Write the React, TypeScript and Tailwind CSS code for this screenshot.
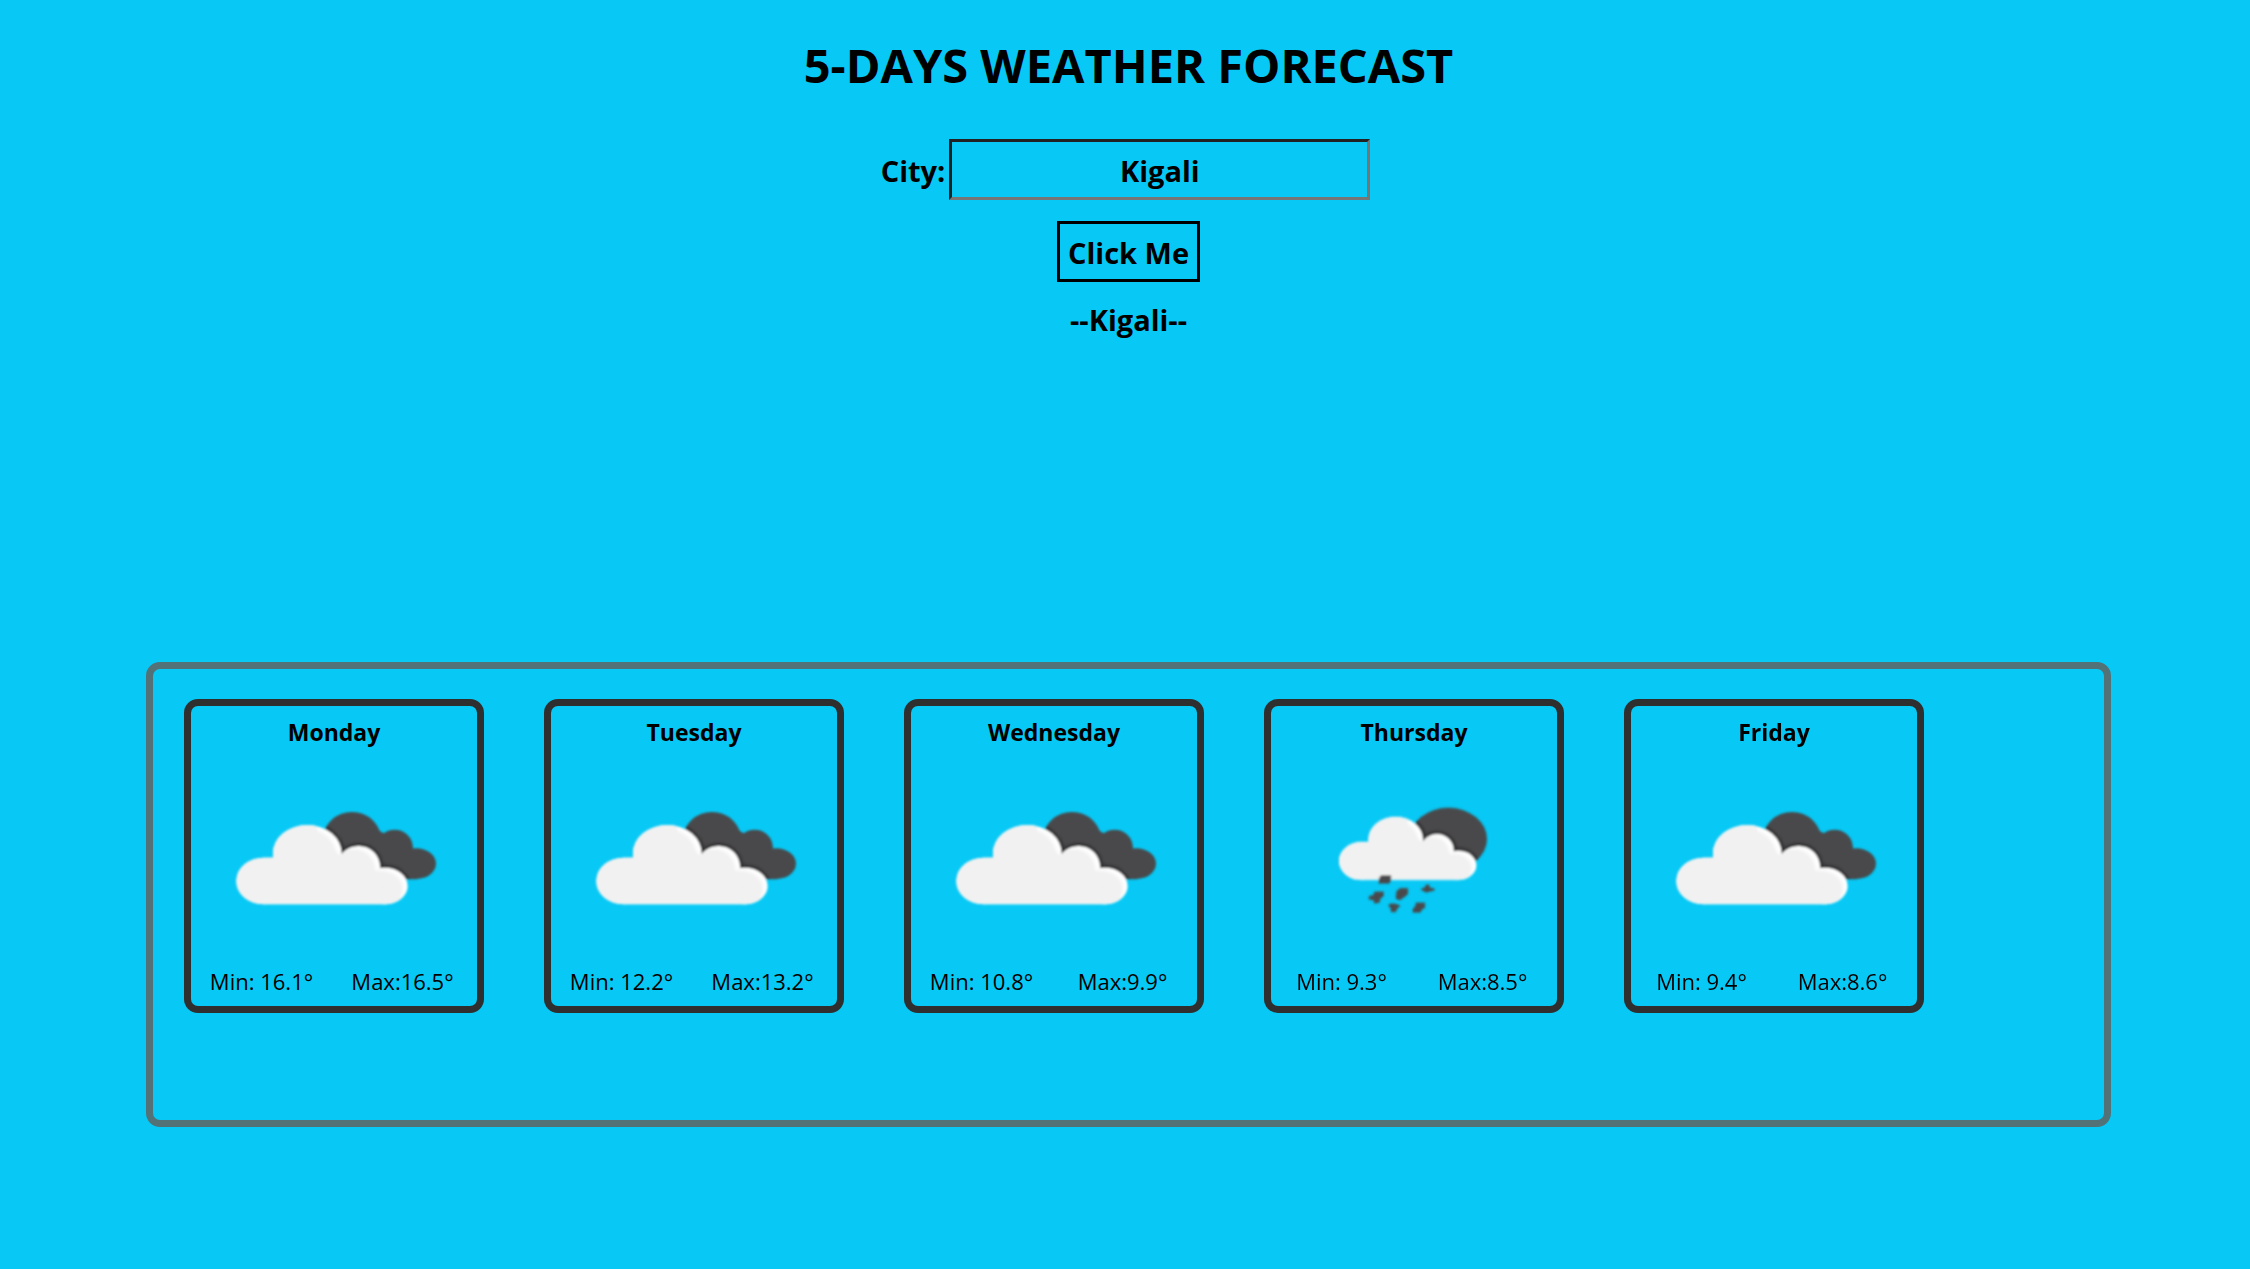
import { useId, useState } from "react";

type Sky = "clouds" | "rain";

interface Day {
  name: string;
  sky: Sky;
  min: string;
  max: string;
}

const DAYS: Day[] = [
  { name: "Monday", sky: "clouds", min: "16.1", max: "16.5" },
  { name: "Tuesday", sky: "clouds", min: "12.2", max: "13.2" },
  { name: "Wednesday", sky: "clouds", min: "10.8", max: "9.9" },
  { name: "Thursday", sky: "rain", min: "9.3", max: "8.5" },
  { name: "Friday", sky: "clouds", min: "9.4", max: "8.6" },
];

// Shape lists are plain fragments so that they can fill a <g> or a <clipPath>.
const bigCloud = (
  <>
    <path d="M130 203 H300 L400 230 L500 240 V343 H130 Z" />
    <ellipse cx="130" cy="273" rx="82" ry="70" />
    <ellipse cx="261" cy="190" rx="103" ry="85" />
    <ellipse cx="415" cy="230" rx="64" ry="62" />
    <ellipse cx="493" cy="288" rx="69" ry="55" />
  </>
);

const backCloud = (
  <>
    <path d="M330 120 L440 100 L540 160 L600 200 L590 268 H520 L340 180 Z" />
    <ellipse cx="395" cy="148" rx="87" ry="82" />
    <ellipse cx="523" cy="174" rx="55" ry="55" />
    <ellipse cx="588" cy="221" rx="59" ry="46" />
  </>
);

const smallCloud = (
  <>
    <path d="M122 156 H260 L350 180 L415 190 V270 H122 Z" />
    <ellipse cx="122" cy="213" rx="66" ry="57" />
    <ellipse cx="226" cy="148" rx="82" ry="68" />
    <ellipse cx="350" cy="180" rx="50" ry="48" />
    <ellipse cx="413" cy="226" rx="55" ry="44" />
  </>
);

const darkDisc = <ellipse cx="384" cy="147" rx="116" ry="94" />;

function CloudsIcon() {
  const id = useId();
  return (
    <svg viewBox="-4 0 690 420" className="h-[140px] w-[230px]" aria-hidden="true">
      <defs>
        <filter id={id + "soft"}>
          <feGaussianBlur stdDeviation="3" />
        </filter>
        <filter id={id + "shade"}>
          <feGaussianBlur stdDeviation="5" />
        </filter>
        <clipPath id={id + "back"}>{backCloud}</clipPath>
        <clipPath id={id + "front"}>{bigCloud}</clipPath>
      </defs>
      <g filter={`url(#${id}soft)`}>
        <g fill="#4a494b">{backCloud}</g>
        <g clipPath={`url(#${id}back)`}>
          <g fill="#2b2c2e" stroke="#2b2c2e" strokeWidth="16" filter={`url(#${id}shade)`}>
            {bigCloud}
          </g>
        </g>
        <g fill="#ffffff">{bigCloud}</g>
        <g clipPath={`url(#${id}front)`}>
          <g fill="#f1f1f1" transform="translate(-14 8)" filter={`url(#${id}shade)`}>
            {bigCloud}
          </g>
          <path d="M0 0 H290 V130 L400 240 L540 320 L562 345 H0 Z" fill="#f1f1f1" />
        </g>
      </g>
    </svg>
  );
}

function RainIcon() {
  const id = useId();
  return (
    <svg viewBox="-64 0 690 420" className="h-[140px] w-[230px]" aria-hidden="true">
      <defs>
        <filter id={id + "soft"}>
          <feGaussianBlur stdDeviation="3" />
        </filter>
        <filter id={id + "shade"}>
          <feGaussianBlur stdDeviation="5" />
        </filter>
        <clipPath id={id + "back"}>{darkDisc}</clipPath>
        <clipPath id={id + "front"}>{smallCloud}</clipPath>
      </defs>
      <g filter={`url(#${id}soft)`}>
        <g fill="#4a494b">{darkDisc}</g>
        <g clipPath={`url(#${id}back)`}>
          <g fill="#2b2c2e" stroke="#2b2c2e" strokeWidth="16" filter={`url(#${id}shade)`}>
            {smallCloud}
          </g>
        </g>
        <g fill="#ffffff">{smallCloud}</g>
        <g clipPath={`url(#${id}front)`}>
          <g fill="#f1f1f1" transform="translate(-14 8)" filter={`url(#${id}shade)`}>
            {smallCloud}
          </g>
          <path d="M0 0 H262 V110 L330 190 L430 235 L467 272 H0 Z" fill="#f1f1f1" />
        </g>
        <g fill="#4a494b">
          <path d="M182 256 H212 V272 L206 281 H175 V267 Z" />
          <path d="M163 305 H190 V318 L180 326 L178 338 L162 341 L160 331 L145 328 L146 318 L158 315 Z" />
          <path d="M239 294 H263 V312 L254 320 L238 331 L226 326 L228 304 Z" />
          <path d="M316 284 H326 L329 293 L343 296 V301 L331 304 L318 308 L303 300 V295 L314 292 Z" />
          <path d="M209 341 H224 L241 347 L232 354 L226 366 H212 L210 352 L203 348 Z" />
          <path d="M287 338 H314 V354 L306 357 L300 368 H277 V355 L283 352 Z" />
        </g>
      </g>
    </svg>
  );
}

function DayCard({ day }: { day: Day }) {
  return (
    <li className="flex w-[300px] flex-col items-center rounded-[14px] border-7 border-[#2f2f2f] py-2">
      <h3 className="text-[23px] leading-9 font-bold">{day.name}</h3>
      <div className="pt-10 pb-9">{day.sky === "rain" ? <RainIcon /> : <CloudsIcon />}</div>
      <div className="grid w-full grid-cols-2 pr-1 pb-0.5 text-center text-[22px] leading-[30px]">
        <span>Min: {day.min}°</span>
        <span>Max:{day.max}°</span>
      </div>
    </li>
  );
}

export default function App() {
  const [city, setCity] = useState("Kigali");
  const [shown, setShown] = useState("Kigali");

  return (
    <main className="min-h-screen bg-[#08c9f5] pt-8 pb-10 pl-[7px] font-['Open_Sans','Noto_Sans',sans-serif] text-black">
      <h1 className="text-center text-[47px] leading-[66px] font-bold">5-DAYS WEATHER FORECAST</h1>

      <form
        className="mt-[41px] flex flex-col items-center text-[29px] leading-10 font-bold"
        onSubmit={(e) => {
          e.preventDefault();
          setShown(city);
        }}
      >
        <div className="flex items-center gap-1 pr-1.5">
          <label htmlFor="city" className="pt-0.5">
            City:
          </label>
          <input
            id="city"
            value={city}
            onChange={(e) => setCity(e.target.value)}
            className="h-[61px] w-[421px] border-3 border-t-[#222222] border-r-[#767676] border-b-[#767676] border-l-[#222222] bg-transparent pt-0.5 text-center outline-none"
          />
        </div>
        <button type="submit" className="mt-[21px] h-[61px] border-3 border-black px-2 pt-0.5">
          Click Me
        </button>
      </form>

      <h2 className="mt-[18px] text-center text-[29px] leading-10 font-bold">--{shown}--</h2>

      <ul className="mx-[139px] mt-[322px] flex min-h-[465px] flex-wrap content-start gap-[60px] rounded-[14px] border-7 border-[#527278] px-[31px] py-[30px]">
        {DAYS.map((day) => (
          <DayCard key={day.name} day={day} />
        ))}
      </ul>
    </main>
  );
}
